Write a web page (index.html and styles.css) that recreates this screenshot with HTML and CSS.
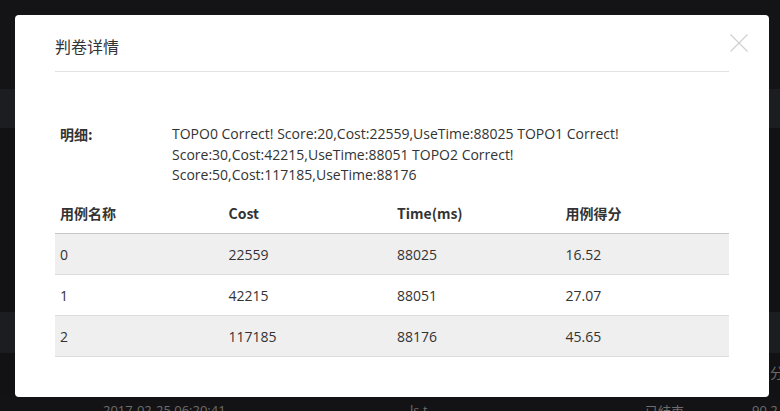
FILE: index.html
```html
<!DOCTYPE html>
<html lang="zh-CN">
<head>
<meta charset="utf-8">
<title>判卷详情</title>
<link rel="stylesheet" href="styles.css">
</head>
<body>
<div class="page">
  <div class="bg-top"></div>
  <div class="bg-bar"></div>
  <div class="bg-mid"></div>
  <div class="bg-bar bg-bar2"><span class="bg-fen">分</span></div>
  <div class="bg-gap"></div>
  <div class="bg-row">
    <span class="bg-date">2017-02-25 06:20:41</span>
    <span class="bg-name">ls.t</span>
    <span class="bg-state">已结束</span>
    <span class="bg-score">90.2</span>
  </div>
</div>

<div class="modal">
  <div class="modal-header">
    <h2 class="modal-title">判卷详情</h2>
  </div>
  <button class="modal-close" aria-label="关闭">
    <svg width="18" height="18" viewBox="0 0 18 18"><path d="M0.5 0.5 L17.5 17.5 M17.5 0.5 L0.5 17.5" stroke="#cfcfcf" stroke-width="1.1" fill="none"/></svg>
  </button>
  <div class="modal-body">
    <div class="detail">
      <div class="detail-label">明细:</div>
      <div class="detail-text">TOPO0 Correct! Score:20,Cost:22559,UseTime:88025 TOPO1 Correct! Score:30,Cost:42215,UseTime:88051 TOPO2 Correct! Score:50,Cost:117185,UseTime:88176</div>
    </div>
    <table class="cases">
      <thead>
        <tr><th>用例名称</th><th>Cost</th><th>Time(ms)</th><th>用例得分</th></tr>
      </thead>
      <tbody>
        <tr><td>0</td><td>22559</td><td>88025</td><td>16.52</td></tr>
        <tr><td>1</td><td>42215</td><td>88051</td><td>27.07</td></tr>
        <tr><td>2</td><td>117185</td><td>88176</td><td>45.65</td></tr>
      </tbody>
    </table>
  </div>
</div>
</body>
</html>
```

FILE: styles.css
```css
* { box-sizing: border-box; }
html, body { margin: 0; padding: 0; }
body {
  width: 780px;
  height: 411px;
  overflow: hidden;
  background: #131315;
  font-family: "Open Sans", "Noto Sans CJK SC", sans-serif;
  position: relative;
}

.page { display: flex; flex-direction: column; width: 780px; }
.bg-top { height: 89px; background: #141416; }
.bg-bar { height: 39px; background: #1c1d20; position: relative; }
.bg-mid { height: 184px; background: #121214; }
.bg-bar2 { height: 40px; }
.bg-fen { position: absolute; right: -4px; top: 50px; color: #6a6a6a; font-size: 14px; }
.bg-gap { height: 45px; background: #121214; border-top: 1px solid #1c1c1e; }
.bg-row { height: 20px; position: relative; font-size: 13px; color: #6c6c6c; }
.bg-date { position: absolute; left: 103px; top: 4px; }
.bg-name { position: absolute; left: 410px; top: 4px; }
.bg-state { position: absolute; left: 645px; top: 4px; }
.bg-score { position: absolute; left: 752px; top: 4px; }

.modal {
  position: absolute;
  left: 15px;
  top: 15px;
  width: 754px;
  height: 382px;
  background: #fff;
  border-radius: 4px;
  padding: 0 40px;
}
.modal-header {
  padding: 20px 0 14px;
  border-bottom: 1px solid #e3e3e3;
}
.modal-title {
  margin: 0;
  font-size: 16px;
  font-weight: normal;
  line-height: 22px;
  color: #333;
  font-family: "Noto Sans CJK SC", sans-serif;
}
.modal-close {
  position: absolute;
  top: 19px;
  right: 21px;
  width: 18px;
  height: 18px;
  padding: 0;
  border: 0;
  background: none;
  display: block;
}
.modal-close svg { display: block; }

.modal-body { padding-top: 52px; }
.detail { display: flex; font-size: 14px; line-height: 20.5px; color: #333; }
.detail-label {
  width: 117px;
  padding-left: 5px;
  font-weight: bold;
  font-family: "Noto Sans CJK SC", sans-serif;
}
.detail-text { width: 520px; }

.cases {
  margin-top: 7px;
  width: 100%;
  border-collapse: collapse;
  table-layout: fixed;
  font-size: 14px;
  color: #333;
}
.cases th {
  text-align: left;
  font-weight: bold;
  height: 41px;
  padding: 0 5px;
  border-bottom: 1px solid #c6c6c6;
  font-family: "Noto Sans CJK SC", "Open Sans", sans-serif;
}
.cases td {
  height: 41px;
  padding: 0 5px;
  border-bottom: 1px solid #dcdcdc;
}
.cases tbody tr:nth-child(odd) td { background: #efefef; }
```
